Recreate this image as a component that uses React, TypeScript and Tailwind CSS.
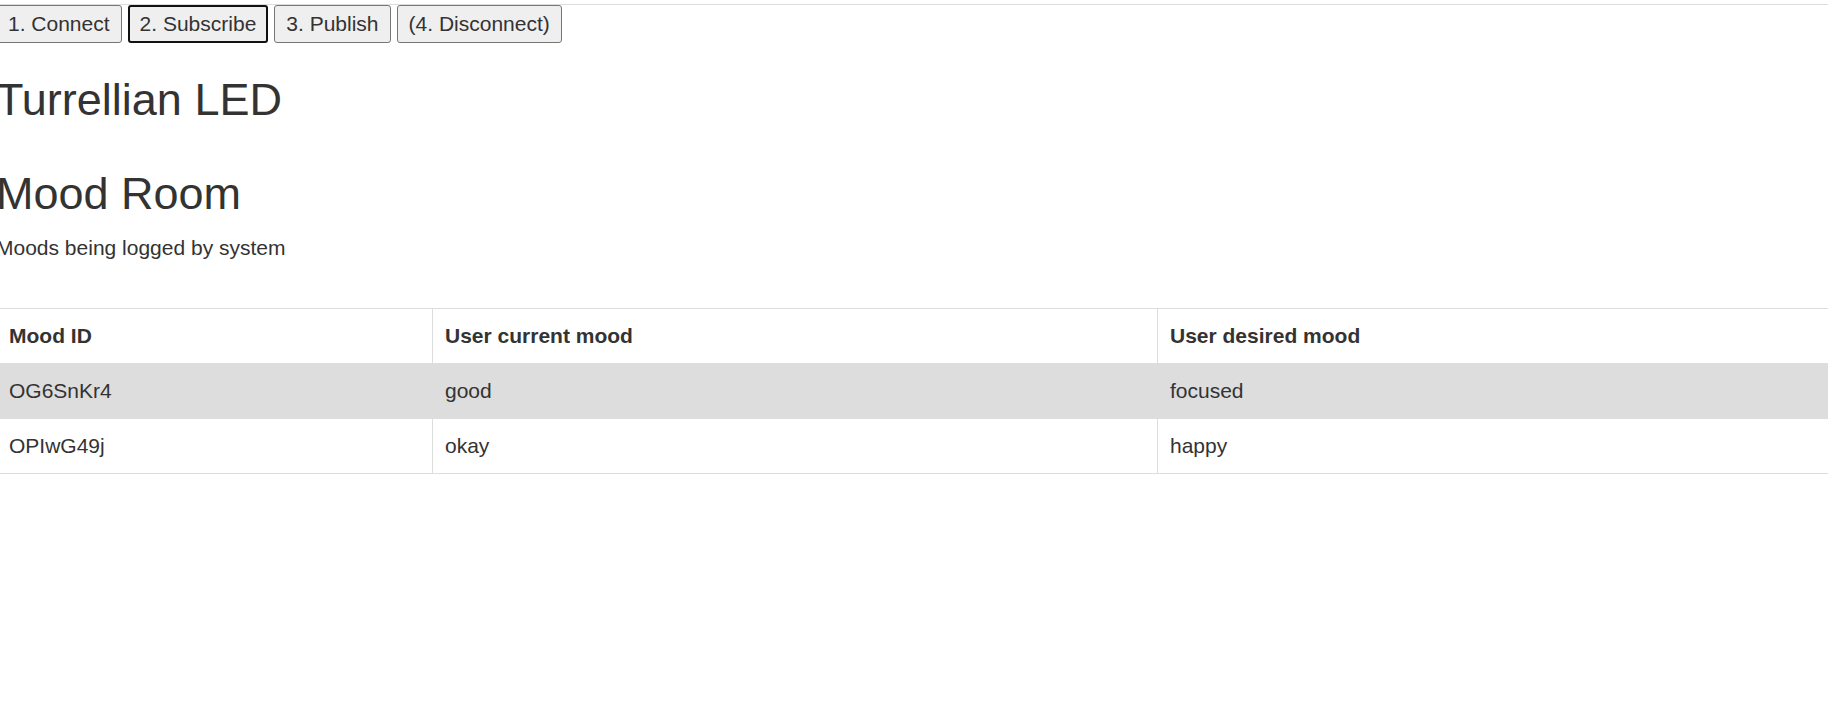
const moods = [
  { id: "OG6SnKr4", current: "good", desired: "focused" },
  { id: "OPIwG49j", current: "okay", desired: "happy" },
];

const steps = ["1. Connect", "2. Subscribe", "3. Publish", "(4. Disconnect)"];

export default function App() {
  return (
    <div className="min-h-screen overflow-hidden bg-white font-['Liberation_Sans',Arial,sans-serif] text-[21px] leading-[30px] text-[#333]">
      <div className="mt-[4px] border-t border-[#ddd]">
        <div className="-ml-[4px]">
          <div className="flex gap-[6px]">
            {steps.map((label, i) => (
              <button
                key={label}
                className={
                  i === 1
                    ? "rounded-[3px] border-2 border-[#111] bg-[#efefef] px-[10px] py-[5px] text-[21px] leading-[24px] text-[#333]"
                    : "rounded-[3px] border border-[#767676] bg-[#efefef] px-[11px] py-[6px] text-[21px] leading-[24px] text-[#333]"
                }
              >
                {label}
              </button>
            ))}
          </div>

          <h1 className="mt-[32px] text-[45px] font-normal leading-[1.1]">Turrellian LED</h1>
          <h2 className="mt-[44px] text-[45px] font-normal leading-[1.1]">Mood Room</h2>
          <p className="mt-[15px]">Moods being logged by system</p>

          <table className="mt-[45px] w-[calc(100%+4px)] table-fixed border-collapse">
            <thead>
              <tr>
                <th className="w-[436px] border border-[#ddd] p-[12px] text-left font-bold">Mood ID</th>
                <th className="w-[725px] border border-[#ddd] p-[12px] text-left font-bold">User current mood</th>
                <th className="border border-[#ddd] p-[12px] text-left font-bold">User desired mood</th>
              </tr>
            </thead>
            <tbody>
              {moods.map((m, i) => (
                <tr key={m.id} className={i % 2 === 0 ? "bg-[#ddd]" : "bg-white"}>
                  <td className="border border-[#ddd] p-[12px]">{m.id}</td>
                  <td className="border border-[#ddd] p-[12px]">{m.current}</td>
                  <td className="border border-[#ddd] p-[12px]">{m.desired}</td>
                </tr>
              ))}
            </tbody>
          </table>
        </div>
      </div>
    </div>
  );
}
